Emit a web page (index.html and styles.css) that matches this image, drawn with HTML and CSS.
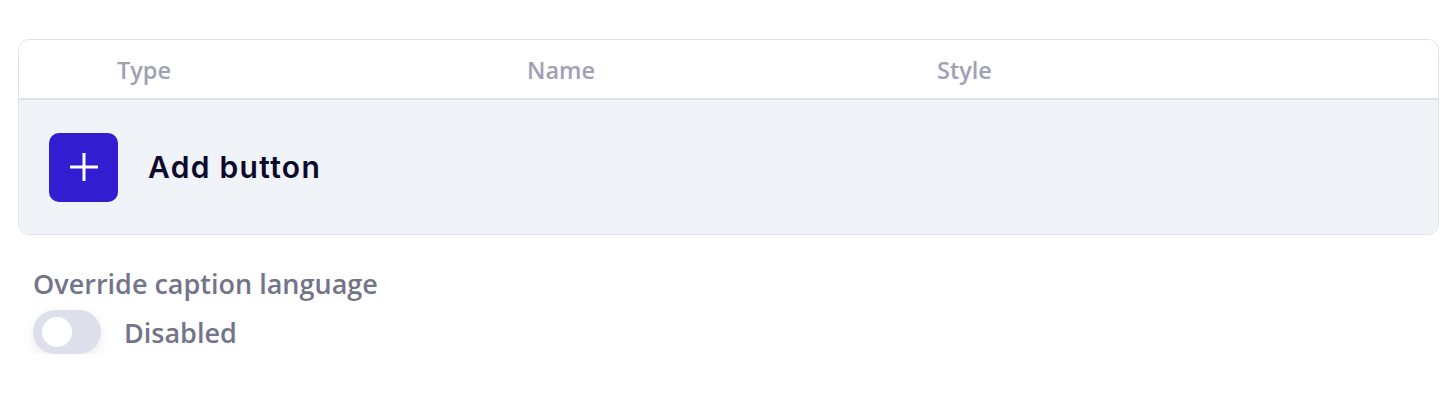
FILE: index.html
```html
<!DOCTYPE html>
<html>
<head>
<meta charset="utf-8">
<link rel="stylesheet" href="styles.css">
</head>
<body>
<div class="page">
  <div class="card">
    <div class="head">
      <div class="col-spacer"></div>
      <div class="col">Type</div>
      <div class="col">Name</div>
      <div class="col">Style</div>
    </div>
    <div class="body">
      <button class="add-btn" type="button">
        <svg width="30" height="30" viewBox="0 0 30 30"><path d="M15 1v28M1 15h28" stroke="#fff" stroke-width="3" fill="none"/></svg>
      </button>
      <span class="add-label">Add button</span>
    </div>
  </div>
  <div class="field">
    <div class="field-label">Override caption language</div>
    <div class="toggle-row">
      <div class="toggle"><div class="knob"></div></div>
      <span class="toggle-text">Disabled</span>
    </div>
  </div>
</div>
</body>
</html>
```
FILE: styles.css
```css
* { box-sizing: border-box; }
html, body { margin: 0; padding: 0; background: #fff; }
body { font-family: "Open Sans", "Noto Sans", sans-serif; }
.page { padding: 39px 18px 0 18px; }
.card {
  border: 1px solid #dfe2ec;
  border-radius: 11px;
  overflow: hidden;
  width: 1421px;
}
.head {
  display: grid;
  grid-template-columns: 98px 410px 410px 1fr;
  height: 60px;
  align-items: center;
  border-bottom: 2px solid #dfe2ec;
  background: #fff;
}
.col {
  font-size: 23.5px;
  font-weight: 600;
  color: #a0a1b4;
  line-height: 30px;
  padding-top: 2px;
}
.body {
  background: #f0f3f8;
  height: 134px;
  display: flex;
  align-items: center;
  padding-left: 30px;
  gap: 30px;
}
.add-btn {
  width: 69px;
  height: 69px;
  border: none;
  border-radius: 10px;
  background: #321dd1;
  display: flex;
  align-items: center;
  justify-content: center;
  padding: 0;
  margin: 0;
}
.add-label {
  font-family: "Inter", sans-serif;
  font-weight: 600;
  font-size: 30px;
  letter-spacing: 1.3px;
  color: #0c0a2c;
}
.field { padding: 32px 0 0 15px; }
.field-label {
  font-size: 27px;
  font-weight: 600;
  color: #737489;
  line-height: 34px;
}
.toggle-row {
  display: flex;
  align-items: center;
  gap: 23px;
  margin-top: 9px;
}
.toggle {
  width: 68px;
  height: 44px;
  border-radius: 22px;
  background: #dde0ea;
  box-shadow: 0 4px 12px rgba(120, 130, 160, 0.15);
  display: flex;
  align-items: center;
  padding-left: 9px;
}
.knob {
  width: 30px;
  height: 30px;
  border-radius: 50%;
  background: #fff;
}
.toggle-text {
  font-size: 27px;
  font-weight: 600;
  color: #737489;
}
```
